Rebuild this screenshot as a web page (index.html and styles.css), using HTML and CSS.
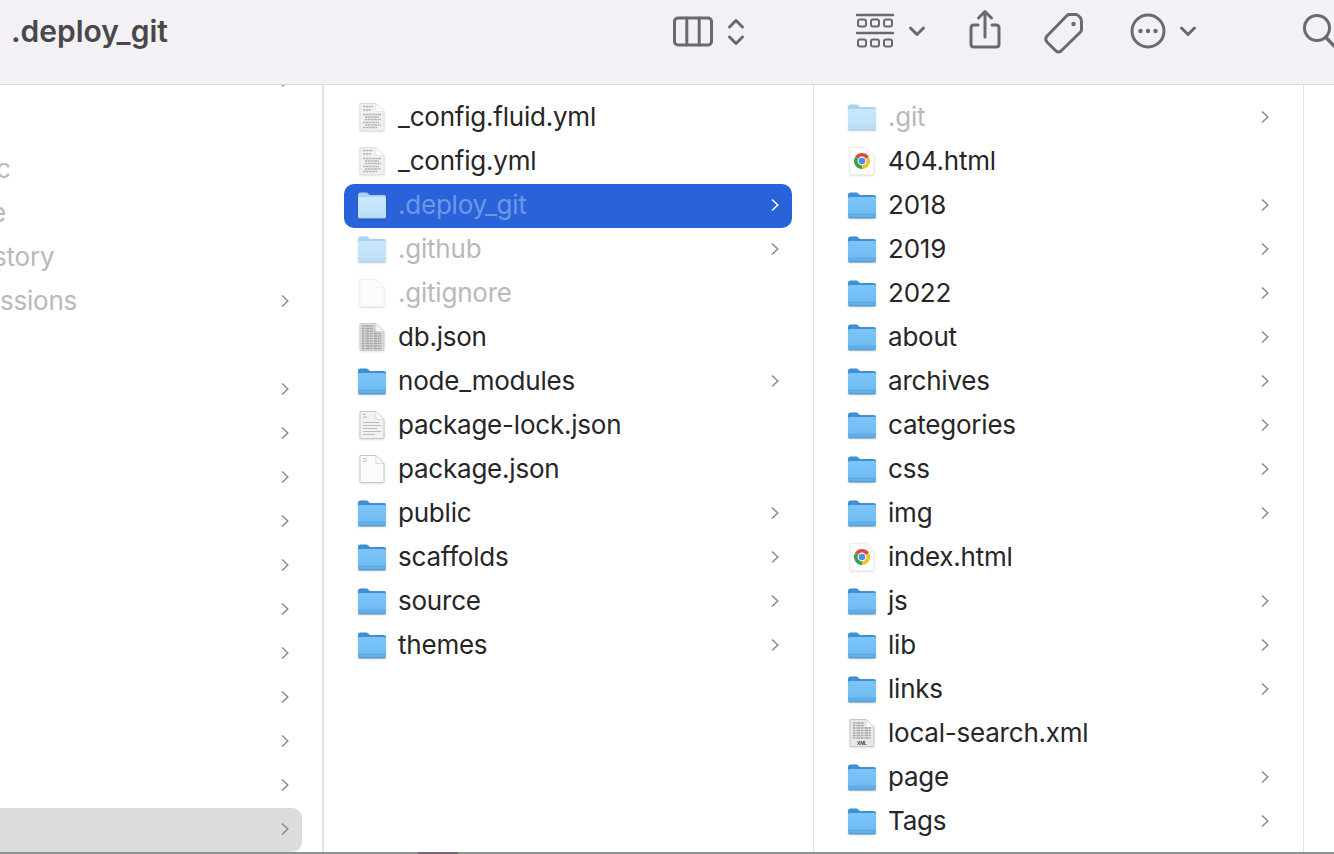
FILE: index.html
```html
<!DOCTYPE html>
<html>
<head>
    <title>.deploy_git</title>
    <link rel="stylesheet" href="styles.css">
</head>
<body>
    <svg class="defs" width="0" height="0">
        <defs>
            <linearGradient id="folderFront" x1="0" y1="0" x2="0" y2="1">
                <stop offset="0" stop-color="#7cc5f8"/>
                <stop offset="0.75" stop-color="#70bbf3"/>
                <stop offset="1" stop-color="#5fa9e4"/>
            </linearGradient>
            <linearGradient id="paleFront" x1="0" y1="0" x2="0" y2="1">
                <stop offset="0" stop-color="#cbe7fb"/>
                <stop offset="1" stop-color="#bcdff7"/>
            </linearGradient>
            <symbol id="folder" viewBox="0 0 30 30">
                <path d="M1 7 V5 Q1 2.5 3.5 2.5 H10 L13 5 H27 Q29 5 29 7 V12 H1 Z" fill="#3f8fd2"/>
                <rect x="1" y="7" width="28" height="21" rx="1.5" fill="url(#folderFront)"/>
                <path d="M1 24.5 H29" stroke="#5aa3dd" stroke-width="0.8"/>
                <path d="M1.5 28 H28.5" stroke="#4d8fc6" stroke-width="1"/>
            </symbol>
            <symbol id="folder-pale" viewBox="0 0 30 30">
                <path d="M1 7 V5 Q1 2.5 3.5 2.5 H10 L13 5 H27 Q29 5 29 7 V12 H1 Z" fill="#a8d2f1"/>
                <rect x="1" y="7" width="28" height="21" rx="1.5" fill="url(#paleFront)"/>
                <path d="M1 24.5 H29" stroke="#aed7f4" stroke-width="0.8"/>
                <path d="M1.5 28 H28.5" stroke="#a2cbe9" stroke-width="1"/>
            </symbol>
            <symbol id="doc-text" viewBox="0 0 30 30">
                <path d="M3 1.5 H19 L27 9.5 V27.5 Q27 28.5 26 28.5 H4 Q3 28.5 3 27.5 Z" fill="#f1f1f1" stroke="#e0e0e0"/>
                <path d="M19 1.5 V9.5 H27 Z" fill="#fff" stroke="#dcdcdc" stroke-width="0.6"/>
                <g stroke="#b4b4b4" stroke-width="1.4" stroke-dasharray="2 0.6 3 0.6">
                    <path d="M6 4.5 H16 M6 8 H14 M6 12.5 H24 M8 15 H22 M8 17.5 H24 M6 20.5 H22 M8 23 H24 M6 25.5 H20"/>
                </g>
            </symbol>
            <symbol id="doc-dense" viewBox="0 0 30 30">
                <path d="M3 1.5 H19 L27 9.5 V27.5 Q27 28.5 26 28.5 H4 Q3 28.5 3 27.5 Z" fill="#dadada" stroke="#cfcfcf"/>
                <path d="M19 1.5 V9.5 H27 Z" fill="#fafafa" stroke="#c9c9c9" stroke-width="0.6"/>
                <g stroke="#a0a0a0" stroke-width="1.6" stroke-dasharray="2 0.6 1 0.6 3 0.6">
                    <path d="M5 4 H17 M5 6.5 H17 M5 9 H18 M5 11.5 H25 M5 14 H25 M5 16.5 H25 M5 19 H25 M5 21.5 H25 M5 24 H25 M5 26.5 H25"/>
                </g>
            </symbol>
            <symbol id="doc-lines" viewBox="0 0 30 30">
                <path d="M3 1.5 H19 L27 9.5 V27.5 Q27 28.5 26 28.5 H4 Q3 28.5 3 27.5 Z" fill="#f2f2f2" stroke="#c8c8c8"/>
                <path d="M19 1.5 V9.5 H27 Z" fill="#fff" stroke="#c8c8c8" stroke-width="0.6"/>
                <path d="M6 4.5 H9 M6 7 H10 M6 12.5 H22 M6 15.5 H24 M6 18.5 H20 M6 21.5 H24 M6 24.5 H18" stroke="#bcbcbc"/>
            </symbol>
            <symbol id="doc-blank" viewBox="0 0 30 30">
                <path d="M3 1.5 H19 L27 9.5 V27.5 Q27 28.5 26 28.5 H4 Q3 28.5 3 27.5 Z" fill="#fbfbfb" stroke="#c8c8c8"/>
                <path d="M19 1.5 V9.5 H27 Z" fill="#fff" stroke="#c8c8c8" stroke-width="0.6"/>
                <path d="M6 4.5 H9 M6 7 H10" stroke="#bcbcbc"/>
            </symbol>
            <symbol id="doc-pale" viewBox="0 0 30 30">
                <path d="M3 1.5 H19 L27 9.5 V27.5 Q27 28.5 26 28.5 H4 Q3 28.5 3 27.5 Z" fill="#fbfbfb" stroke="#efefef"/>
                <path d="M19 1.5 V9.5 H27 Z" fill="#fff" stroke="#efefef" stroke-width="0.6"/>
            </symbol>
            <symbol id="doc-xml" viewBox="0 0 30 30">
                <path d="M3 1.5 H19 L27 9.5 V27.5 Q27 28.5 26 28.5 H4 Q3 28.5 3 27.5 Z" fill="#e8e8e8" stroke="#c8c8c8"/>
                <path d="M19 1.5 V9.5 H27 Z" fill="#fff" stroke="#c8c8c8" stroke-width="0.6"/>
                <g stroke="#a4a4a4" stroke-width="1.5" stroke-dasharray="2 0.6 1 0.6 3 0.6">
                    <path d="M6 5 H17 M6 7.5 H17 M6 10 H24 M6 12.5 H24 M6 15 H24 M6 17.5 H24 M6 20 H24"/>
                </g>
                <text x="15" y="27" text-anchor="middle" class="xml-label">XML</text>
            </symbol>
            <symbol id="doc-chrome" viewBox="0 0 30 30">
                <path d="M3 1.5 H19 L27 9.5 V27.5 Q27 28.5 26 28.5 H4 Q3 28.5 3 27.5 Z" fill="#fff" stroke="#eeeeee"/>
                <path d="M19 1.5 V9.5 H27 Z" fill="#fafafa" stroke="#e8e8e8" stroke-width="0.6"/>
                <path d="M15 15 L8.07 11 A8 8 0 0 1 21.93 11 Z" fill="#dd4b3e"/>
                <path d="M15 15 L21.93 11 A8 8 0 0 1 15 23 Z" fill="#f5c02e"/>
                <path d="M15 15 L15 23 A8 8 0 0 1 8.07 11 Z" fill="#3f9f50"/>
                <circle cx="15" cy="15" r="4.4" fill="#fff"/>
                <circle cx="15" cy="15" r="3.3" fill="#4d8ff0"/>
            </symbol>
            <symbol id="chevron" viewBox="0 0 8 14">
                <path d="M1 1.5 L6.8 7 L1 12.5" fill="none" stroke="currentColor" stroke-width="1.5"/>
            </symbol>
            <symbol id="drop" viewBox="0 0 20 48">
                <path d="M3.5 20 L10 26.5 L16.5 20" fill="none" stroke="currentColor" stroke-width="3" stroke-linecap="round" stroke-linejoin="round"/>
            </symbol>
        </defs>
    </svg>

    <div class="window">
        <header class="toolbar">
            <div class="title">.deploy_git</div>
            <div class="tool-group view-group">
                <svg class="tool" width="41" height="48" viewBox="0 0 41 48">
                    <rect x="2.5" y="10" width="37" height="27" rx="3.5"/>
                    <path d="M14.8 10 V37 M27.2 10 V37"/>
                </svg>
                <svg class="tool" width="20" height="48" viewBox="0 0 20 48">
                    <path d="M3.5 19 L10 12.5 L16.5 19 M3.5 29 L10 35.5 L16.5 29"/>
                </svg>
            </div>
            <div class="tool-group arrange-group">
                <svg class="tool" width="40" height="48" viewBox="0 0 40 48">
                    <path d="M2 7 H38 M2 25 H38" stroke-width="2.4"/>
                    <g stroke-width="2">
                        <rect x="3" y="11.5" width="8" height="7" rx="2"/>
                        <rect x="16" y="11.5" width="8" height="7" rx="2"/>
                        <rect x="29" y="11.5" width="8" height="7" rx="2"/>
                        <rect x="3" y="31.5" width="8" height="7" rx="2"/>
                        <rect x="16" y="31.5" width="8" height="7" rx="2"/>
                        <rect x="29" y="31.5" width="8" height="7" rx="2"/>
                    </g>
                </svg>
                <svg class="drop" width="20" height="48"><use href="#drop"/></svg>
            </div>
            <svg class="tool share" width="34" height="48" viewBox="0 0 34 48">
                <path d="M10 17 H6 Q3 17 3 20 V36 Q3 39 6 39 H28 Q31 39 31 36 V20 Q31 17 28 17 H24"/>
                <path d="M17 29 V4 M10.5 10 L17 3.5 L23.5 10"/>
            </svg>
            <svg class="tool tag" width="41" height="48" viewBox="0 0 41 48">
                <path d="M4 28 L24 7.5 Q25 6.5 26.5 6.5 L33.5 6.5 Q38.5 9 38.5 14 V21.5 Q38.5 23 37.5 24 L18 43 Q15.5 45 13 43 L4 34 Q1.5 31 4 28 Z"/>
                <circle class="solid" cx="30.5" cy="16" r="2.2"/>
            </svg>
            <div class="tool-group more-group">
                <svg class="tool" width="38" height="48" viewBox="0 0 38 48">
                    <circle cx="19" cy="23" r="16"/>
                    <circle class="solid" cx="11.5" cy="23" r="2.2"/>
                    <circle class="solid" cx="19" cy="23" r="2.2"/>
                    <circle class="solid" cx="26.5" cy="23" r="2.2"/>
                </svg>
                <svg class="drop" width="20" height="48"><use href="#drop"/></svg>
            </div>
            <svg class="tool search" width="40" height="48" viewBox="0 0 40 48">
                <circle cx="15" cy="20" r="12.5"/>
                <path d="M24 29.5 L35 41" stroke-width="3.4"/>
            </svg>
        </header>

        <main class="columns">
            <section class="col col-side">
                <div class="list side-list">
                    <div class="row"><span class="name"></span><svg class="chev"><use href="#chevron"/></svg></div>
                    <div class="row"><span class="name"></span></div>
                    <div class="row dim"><span class="name cut-c">c</span></div>
                    <div class="row dim"><span class="name cut-e">e</span></div>
                    <div class="row dim"><span class="name cut-h">story</span></div>
                    <div class="row dim"><span class="name cut-s">ssions</span><svg class="chev"><use href="#chevron"/></svg></div>
                    <div class="row"><span class="name"></span></div>
                    <div class="row"><span class="name"></span><svg class="chev"><use href="#chevron"/></svg></div>
                    <div class="row"><span class="name"></span><svg class="chev"><use href="#chevron"/></svg></div>
                    <div class="row"><span class="name"></span><svg class="chev"><use href="#chevron"/></svg></div>
                    <div class="row"><span class="name"></span><svg class="chev"><use href="#chevron"/></svg></div>
                    <div class="row"><span class="name"></span><svg class="chev"><use href="#chevron"/></svg></div>
                    <div class="row"><span class="name"></span><svg class="chev"><use href="#chevron"/></svg></div>
                    <div class="row"><span class="name"></span><svg class="chev"><use href="#chevron"/></svg></div>
                    <div class="row"><span class="name"></span><svg class="chev"><use href="#chevron"/></svg></div>
                    <div class="row"><span class="name"></span><svg class="chev"><use href="#chevron"/></svg></div>
                    <div class="row"><span class="name"></span><svg class="chev"><use href="#chevron"/></svg></div>
                    <div class="row parent"><span class="name"></span><svg class="chev"><use href="#chevron"/></svg></div>
                </div>
            </section>

            <section class="col">
                <div class="list">
                    <div class="row"><svg class="icon"><use href="#doc-text"/></svg><span class="name">_config.fluid.yml</span></div>
                    <div class="row"><svg class="icon"><use href="#doc-text"/></svg><span class="name">_config.yml</span></div>
                    <div class="row selected"><svg class="icon"><use href="#folder-pale"/></svg><span class="name">.deploy_git</span><svg class="chev"><use href="#chevron"/></svg></div>
                    <div class="row dim"><svg class="icon"><use href="#folder-pale"/></svg><span class="name">.github</span><svg class="chev"><use href="#chevron"/></svg></div>
                    <div class="row dim"><svg class="icon"><use href="#doc-pale"/></svg><span class="name">.gitignore</span></div>
                    <div class="row"><svg class="icon"><use href="#doc-dense"/></svg><span class="name">db.json</span></div>
                    <div class="row"><svg class="icon"><use href="#folder"/></svg><span class="name">node_modules</span><svg class="chev"><use href="#chevron"/></svg></div>
                    <div class="row"><svg class="icon"><use href="#doc-lines"/></svg><span class="name">package-lock.json</span></div>
                    <div class="row"><svg class="icon"><use href="#doc-blank"/></svg><span class="name">package.json</span></div>
                    <div class="row"><svg class="icon"><use href="#folder"/></svg><span class="name">public</span><svg class="chev"><use href="#chevron"/></svg></div>
                    <div class="row"><svg class="icon"><use href="#folder"/></svg><span class="name">scaffolds</span><svg class="chev"><use href="#chevron"/></svg></div>
                    <div class="row"><svg class="icon"><use href="#folder"/></svg><span class="name">source</span><svg class="chev"><use href="#chevron"/></svg></div>
                    <div class="row"><svg class="icon"><use href="#folder"/></svg><span class="name">themes</span><svg class="chev"><use href="#chevron"/></svg></div>
                </div>
            </section>

            <section class="col">
                <div class="list">
                    <div class="row dim"><svg class="icon"><use href="#folder-pale"/></svg><span class="name">.git</span><svg class="chev"><use href="#chevron"/></svg></div>
                    <div class="row"><svg class="icon"><use href="#doc-chrome"/></svg><span class="name">404.html</span></div>
                    <div class="row"><svg class="icon"><use href="#folder"/></svg><span class="name">2018</span><svg class="chev"><use href="#chevron"/></svg></div>
                    <div class="row"><svg class="icon"><use href="#folder"/></svg><span class="name">2019</span><svg class="chev"><use href="#chevron"/></svg></div>
                    <div class="row"><svg class="icon"><use href="#folder"/></svg><span class="name">2022</span><svg class="chev"><use href="#chevron"/></svg></div>
                    <div class="row"><svg class="icon"><use href="#folder"/></svg><span class="name">about</span><svg class="chev"><use href="#chevron"/></svg></div>
                    <div class="row"><svg class="icon"><use href="#folder"/></svg><span class="name">archives</span><svg class="chev"><use href="#chevron"/></svg></div>
                    <div class="row"><svg class="icon"><use href="#folder"/></svg><span class="name">categories</span><svg class="chev"><use href="#chevron"/></svg></div>
                    <div class="row"><svg class="icon"><use href="#folder"/></svg><span class="name">css</span><svg class="chev"><use href="#chevron"/></svg></div>
                    <div class="row"><svg class="icon"><use href="#folder"/></svg><span class="name">img</span><svg class="chev"><use href="#chevron"/></svg></div>
                    <div class="row"><svg class="icon"><use href="#doc-chrome"/></svg><span class="name">index.html</span></div>
                    <div class="row"><svg class="icon"><use href="#folder"/></svg><span class="name">js</span><svg class="chev"><use href="#chevron"/></svg></div>
                    <div class="row"><svg class="icon"><use href="#folder"/></svg><span class="name">lib</span><svg class="chev"><use href="#chevron"/></svg></div>
                    <div class="row"><svg class="icon"><use href="#folder"/></svg><span class="name">links</span><svg class="chev"><use href="#chevron"/></svg></div>
                    <div class="row"><svg class="icon"><use href="#doc-xml"/></svg><span class="name">local-search.xml</span></div>
                    <div class="row"><svg class="icon"><use href="#folder"/></svg><span class="name">page</span><svg class="chev"><use href="#chevron"/></svg></div>
                    <div class="row"><svg class="icon"><use href="#folder"/></svg><span class="name">Tags</span><svg class="chev"><use href="#chevron"/></svg></div>
                </div>
            </section>

            <section class="col col-empty"></section>
        </main>

        <div class="bottom-edge"><span class="edge-mark"></span></div>
    </div>
</body>
</html>
```

FILE: styles.css
```css
html, body {
    margin: 0;
    height: 100%;
    overflow: hidden;
}

body {
    font-family: 'Inter', 'Liberation Sans', sans-serif;
    background-color: #fff;
    color: #262626;
}

.defs {
    display: block;
    height: 0;
}

.xml-label {
    font-family: 'Liberation Sans', sans-serif;
    font-size: 5px;
    font-weight: 700;
    fill: #444;
}

.window {
    display: flex;
    flex-direction: column;
    height: 854px;
    overflow: hidden;
}

/* toolbar */
.toolbar {
    display: flex;
    flex: none;
    box-sizing: border-box;
    height: 85px;
    padding: 8px 0 0 11px;
    background-color: #f3f1f6;
    border-bottom: 1px solid #d9d8da;
    overflow: hidden;
}

.title {
    flex: none;
    width: 661px;
    height: 48px;
    line-height: 47px;
    font-size: 30px;
    font-weight: 600;
    color: #48484b;
}

.tool-group {
    display: flex;
    flex: none;
}

.view-group {
    gap: 13px;
}

.arrange-group {
    gap: 12px;
    margin-left: 109px;
}

.more-group {
    gap: 11px;
    margin-left: 45px;
}

.tool {
    flex: none;
    fill: none;
    stroke: #6a6a6e;
    stroke-width: 3;
    stroke-linecap: round;
    stroke-linejoin: round;
}

.tool .solid {
    fill: #6a6a6e;
    stroke: none;
}

.drop {
    flex: none;
    color: #6a6a6e;
}

.share {
    margin-left: 41px;
}

.tag {
    margin-left: 41px;
}

.search {
    margin-left: 104px;
}

/* columns */
.columns {
    display: flex;
    flex: 1;
    min-height: 0;
}

.col {
    flex: none;
    box-sizing: border-box;
    width: 490px;
    border-right: 1px solid #e2e2e2;
    overflow: hidden;
}

.col-side {
    width: 324px;
    border-right-width: 2px;
}

.col-empty {
    flex: 1;
    border-right: none;
}

.list {
    display: flex;
    flex-direction: column;
    margin: 11px 21px 0 20px;
}

.side-list {
    margin: -25px 20px 0 -20px;
}

.row {
    display: flex;
    flex: none;
    align-items: center;
    box-sizing: border-box;
    height: 44px;
    padding: 0 13px 2px;
    border-radius: 10px;
    font-size: 26px;
    letter-spacing: -0.22px;
}

.icon {
    flex: none;
    width: 30px;
    height: 30px;
    margin-right: 11px;
    filter: drop-shadow(0 1px 1px rgba(0, 0, 0, 0.12));
}

.name {
    flex: 1;
    margin-bottom: 2px;
    white-space: nowrap;
}

.chev {
    flex: none;
    width: 8px;
    height: 14px;
    color: #8b8b8b;
}

.dim .name {
    color: #b9b9b9;
}

.selected {
    background-color: #2a62d9;
}

.selected .name {
    color: #6d98e8;
}

.selected .chev {
    color: #fff;
}

.parent {
    background-color: #dcdcdc;
}

.side-list .row {
    padding-left: 20px;
}

.cut-c {
    margin-left: -4px;
}

.cut-e {
    margin-left: -9px;
}

.cut-h {
    margin-left: -7px;
}

.cut-s {
    margin-left: 0;
}

.bottom-edge {
    display: flex;
    flex: none;
    height: 2px;
    padding-left: 418px;
    background-color: #8f9292;
}

.edge-mark {
    width: 40px;
    background-color: #7a6478;
}
```
